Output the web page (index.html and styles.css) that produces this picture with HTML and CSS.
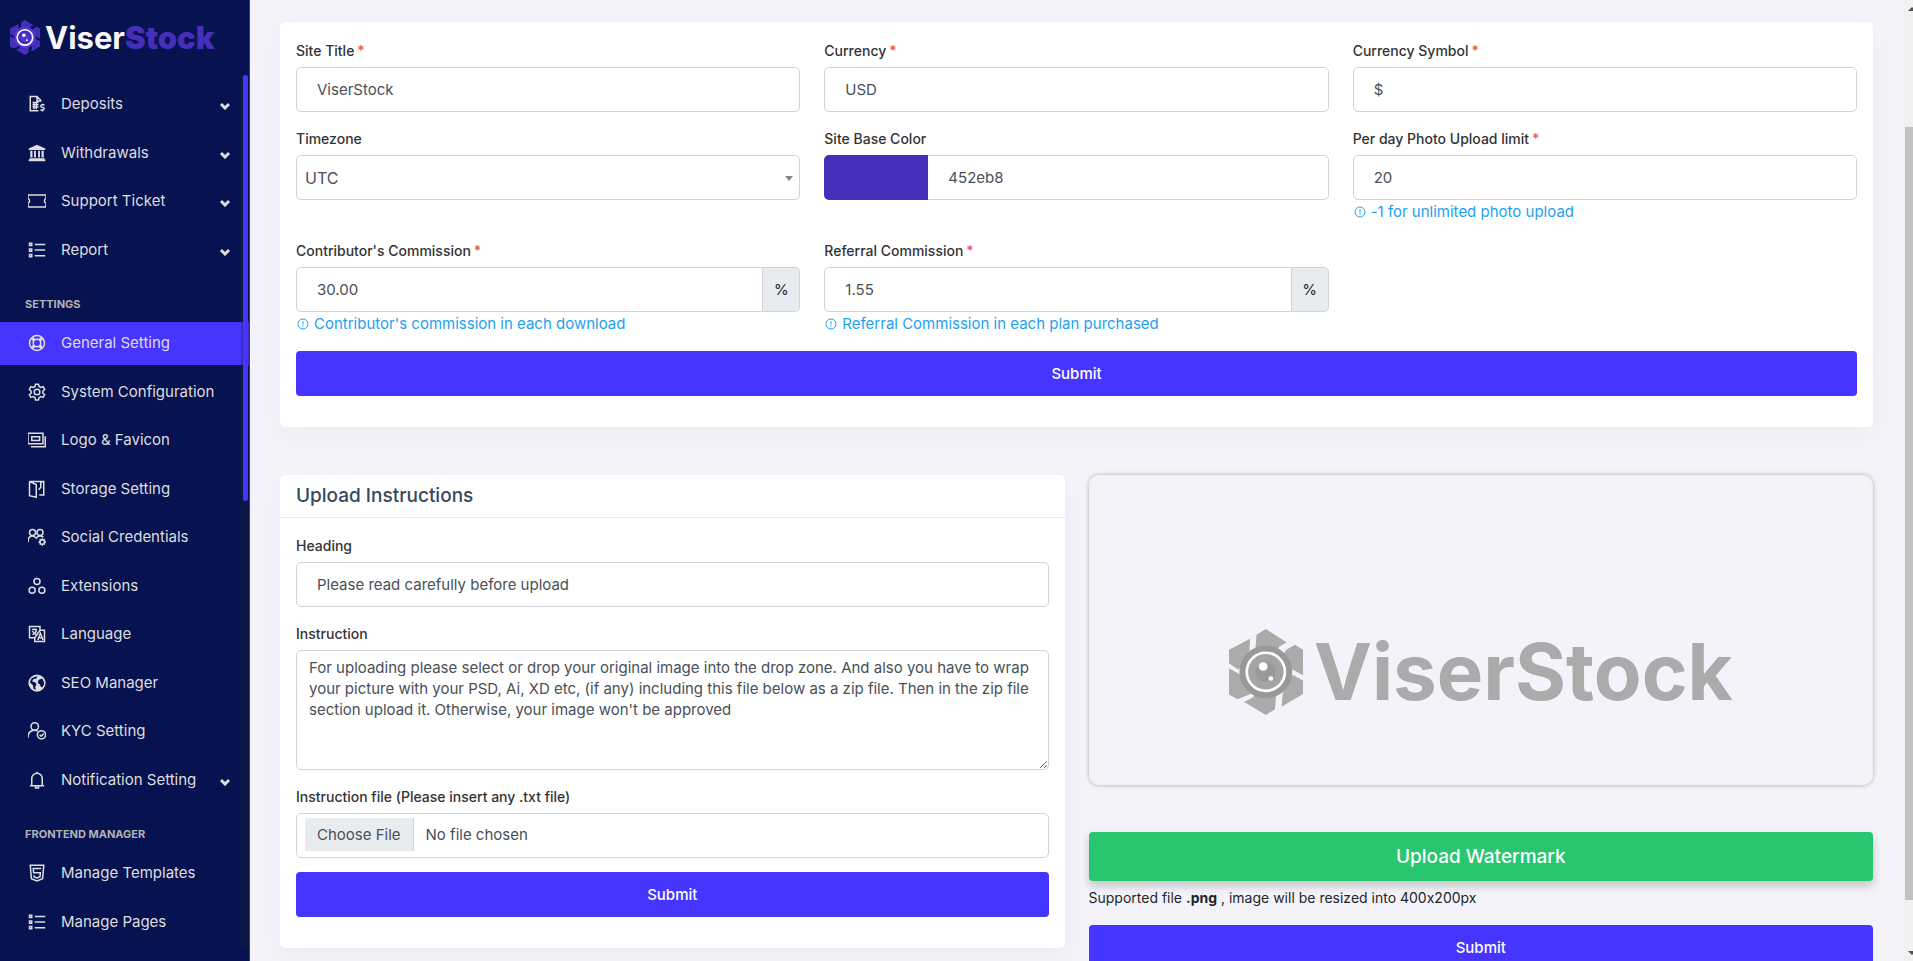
FILE: index.html
```html
<!DOCTYPE html>
<html lang="en">
<head>
<meta charset="utf-8">
<meta name="viewport" content="width=device-width, initial-scale=1">
<title>ViserStock - General Setting</title>
<link rel="stylesheet" href="styles.css">
</head>
<body>
<svg class="sprite" aria-hidden="true">
  <symbol id="logo-mark" viewBox="40 28 221 257">
    <g class="blade">
      <path d="M150 28 213 68 190 80 184 100H118L122 45z"/>
      <path d="M211 90 237 75 261 90V166L228 148 200 110z"/>
      <path d="M230 165 261 182V222L197 260 201 218z"/>
      <path d="M85 246 112 232 120 214H182L177 268 150 285z"/>
      <path d="M40 145 72 163 105 222 65 238 40 224z"/>
      <path d="M40 90 103 57 101 100 68 150 40 130z"/>
    </g>
    <circle class="lens" cx="150" cy="156" r="79"/>
    <circle class="glass" cx="150" cy="156" r="57"/>
    <circle class="lens" cx="150" cy="156" r="30"/>
    <circle class="shine" cx="142" cy="140" r="13"/>
    <circle class="shine" cx="165" cy="176" r="7"/>
  </symbol>
  <symbol id="i-invoice" viewBox="0 0 24 24"><path d="M17 9V7l-5-5H3v19h11M12 2v6h5M6 10h8M6 13h8M6 16h8M8 10v9M11 10v9"/><path d="M22 13h-3.500a1.800 1.800 0 0 0 0 3.500h1.500a1.800 1.800 0 0 1 0 3.500H16.500M19.300 11.500V13M19.300 20v2"/></symbol>
  <symbol id="i-bank" viewBox="0 0 24 24"><path class="solid" d="M12 1 23 6v2H1V6zM3 9h3v9H3zM8 9h2.500v9H8zM13.500 9H16v9h-2.500zM18 9h3v9h-3zM2 19h20v1.500h1V23H1v-2.500h1z"/></symbol>
  <symbol id="i-ticket" viewBox="0 0 24 24"><path d="M0 4h24v5a3.200 3.200 0 0 0 0 6v5H0v-5a3.200 3.200 0 0 0 0-6z"/></symbol>
  <symbol id="i-list" viewBox="0 0 24 24"><path d="M9 4.500h14M9 12h14M9 19.500h14M2 3h3v3H2zM2 10.500h3v3H2zM2 18h3v3H2z"/></symbol>
  <symbol id="i-ring" viewBox="0 0 24 24"><circle cx="12" cy="12" r="10"/><circle cx="12" cy="12" r="5"/><path class="thick" d="m5.500 5.500 3 3M18.500 5.500l-3 3M5.500 18.500l3-3M18.500 18.500l-3-3"/></symbol>
  <symbol id="i-gear" viewBox="0 0 24 24"><path d="M10 1.500h4l.7 3.200 2.300 1.300 3.200-1 2 3.500L19.800 11v2.600l2.400 2.100-2 3.500-3.200-1-2.300 1.300-.7 3h-4l-.7-3L7 18.200l-3.200 1-2-3.500 2.400-2.100V11L1.800 8.500l2-3.500L7 6l2.300-1.300z"/><circle cx="12" cy="12" r="3.800"/></symbol>
  <symbol id="i-images" viewBox="0 0 24 24"><path d="M0 3h20v14H0zM5 7.500h10.500v5H5zM23 7v14H4"/></symbol>
  <symbol id="i-door" viewBox="0 0 24 24"><path d="M2 2h19v18h-6M2 2v19l9 2V6L2 2M21 2l-4 1v7l-3 3"/></symbol>
  <symbol id="i-users-cog" viewBox="0 0 24 24"><circle cx="6" cy="6" r="4"/><circle cx="16" cy="6" r="4"/><path d="M0 19c0-5 2-8.500 6-8.500 2 0 3.500 1 5 3 1-2 3-3 5-3 2.500 0 4 1 4.500 2"/><circle cx="19" cy="18.500" r="3"/><path d="M19 13.500v2M19 21.500v2M14 18.500h2M22 18.500h2M15.500 15l1.400 1.400M21.100 20.600l1.400 1.400M22.500 15l-1.400 1.400M16.900 20.600 15.500 22"/></symbol>
  <symbol id="i-cubes" viewBox="0 0 24 24"><circle cx="12" cy="6" r="4"/><circle cx="5.500" cy="17.500" r="4"/><circle cx="18.500" cy="17.500" r="4"/></symbol>
  <symbol id="i-language" viewBox="0 0 24 24"><path d="M2 2h14v5h6v15H9v-5H2zM16 7 9 17M5 6h7M8.500 4.500V6M6 13c3-1 5-4 5-7M6 8c1 2 3 4 5 4.500M13 20l3.500-9 3.500 9M14.500 17h4"/></symbol>
  <symbol id="i-globe" viewBox="0 0 24 24"><path class="solid" fill-rule="evenodd" d="M12 .5a11.500 11.500 0 1 0 0 23 11.500 11.500 0 0 0 0-23zM13 3l-2 3-4 1-1.500 3 4 1 2 3-2 3 1 4-3-1-1-5-4-4 2-5 4-2zM16 7l3-1 2 4 .5 4-2.500 4-2-1-1-3-3-2 1-4z"/></symbol>
  <symbol id="i-user-check" viewBox="0 0 24 24"><circle cx="9" cy="6" r="5"/><path d="M0 21c0-6 3-10 9-10 2 0 3 .5 4 1"/><circle cx="18" cy="17" r="5.500"/><path d="m15.500 17 2 2 3.500-3.500"/></symbol>
  <symbol id="i-bell" viewBox="0 0 24 24"><path d="M2.500 19.500h19M5 19V10a7 7 0 0 1 14 0v9M12 1v2M10 20v2.500h4V20"/></symbol>
  <symbol id="i-html" viewBox="0 0 24 24"><path d="M3 1.500h18l-1.500 18L12 22.500l-7.500-3z"/><path d="M17.500 6H7l.5 5.500H16.500L16 17l-4 1.500L8 17v-2"/></symbol>
  <symbol id="i-chevron" viewBox="0 0 12 8"><path d="m2 2 4 4 4-4"/></symbol>
  <symbol id="i-info" viewBox="0 0 24 24"><circle cx="12" cy="12" r="10"/><path d="M12 6.500v7M12 15.500v2"/></symbol>
</svg>

<div class="layout">
  <aside class="sidebar">
    <a class="brand" href="#"><svg class="brand-mark"><use href="#logo-mark"/></svg><span class="brand-name">Viser<b>Stock</b></span></a>
    <nav class="menu" aria-label="Main menu">
      <a class="item" href="#"><svg class="icon"><use href="#i-invoice"/></svg><span>Deposits</span><svg class="chevron"><use href="#i-chevron"/></svg></a>
      <a class="item" href="#"><svg class="icon"><use href="#i-bank"/></svg><span>Withdrawals</span><svg class="chevron"><use href="#i-chevron"/></svg></a>
      <a class="item" href="#"><svg class="icon"><use href="#i-ticket"/></svg><span>Support Ticket</span><svg class="chevron"><use href="#i-chevron"/></svg></a>
      <a class="item" href="#"><svg class="icon"><use href="#i-list"/></svg><span>Report</span><svg class="chevron"><use href="#i-chevron"/></svg></a>
      <h2 class="section">SETTINGS</h2>
      <a class="item active" href="#" aria-current="page"><svg class="icon"><use href="#i-ring"/></svg><span>General Setting</span></a>
      <a class="item" href="#"><svg class="icon"><use href="#i-gear"/></svg><span>System Configuration</span></a>
      <a class="item" href="#"><svg class="icon"><use href="#i-images"/></svg><span>Logo &amp; Favicon</span></a>
      <a class="item" href="#"><svg class="icon"><use href="#i-door"/></svg><span>Storage Setting</span></a>
      <a class="item" href="#"><svg class="icon"><use href="#i-users-cog"/></svg><span>Social Credentials</span></a>
      <a class="item" href="#"><svg class="icon"><use href="#i-cubes"/></svg><span>Extensions</span></a>
      <a class="item" href="#"><svg class="icon"><use href="#i-language"/></svg><span>Language</span></a>
      <a class="item" href="#"><svg class="icon"><use href="#i-globe"/></svg><span>SEO Manager</span></a>
      <a class="item" href="#"><svg class="icon"><use href="#i-user-check"/></svg><span>KYC Setting</span></a>
      <a class="item" href="#"><svg class="icon"><use href="#i-bell"/></svg><span>Notification Setting</span><svg class="chevron"><use href="#i-chevron"/></svg></a>
      <h2 class="section">FRONTEND MANAGER</h2>
      <a class="item" href="#"><svg class="icon"><use href="#i-html"/></svg><span>Manage Templates</span></a>
      <a class="item" href="#"><svg class="icon"><use href="#i-list"/></svg><span>Manage Pages</span></a>
      <div class="menu-track"><div class="menu-thumb"></div></div>
    </nav>
  </aside>

  <main class="content">
    <form class="card card-body">
      <div class="grid">
        <div class="field">
          <label class="required" for="site-title">Site Title</label>
          <input class="control" id="site-title" type="text" value="ViserStock">
        </div>
        <div class="field">
          <label class="required" for="currency">Currency</label>
          <input class="control" id="currency" type="text" value="USD">
        </div>
        <div class="field">
          <label class="required" for="symbol">Currency Symbol</label>
          <input class="control" id="symbol" type="text" value="$">
        </div>
        <div class="field">
          <label for="timezone">Timezone</label>
          <div class="select"><select class="control" id="timezone"><option>UTC</option></select></div>
        </div>
        <div class="field">
          <label for="base-color">Site Base Color</label>
          <div class="group">
            <button class="swatch" type="button" aria-label="Pick base color"></button>
            <input class="control" id="base-color" type="text" value="452eb8">
          </div>
        </div>
        <div class="field">
          <label class="required" for="limit">Per day Photo Upload limit</label>
          <input class="control" id="limit" type="text" value="20">
          <p class="hint"><svg class="hint-icon"><use href="#i-info"/></svg>-1 for unlimited photo upload</p>
        </div>
        <div class="field">
          <label class="required" for="contributor">Contributor's Commission</label>
          <div class="group">
            <input class="control" id="contributor" type="text" value="30.00"><span class="addon">%</span>
          </div>
          <p class="hint"><svg class="hint-icon"><use href="#i-info"/></svg>Contributor's commission in each download</p>
        </div>
        <div class="field">
          <label class="required" for="referral">Referral Commission</label>
          <div class="group">
            <input class="control" id="referral" type="text" value="1.55"><span class="addon">%</span>
          </div>
          <p class="hint"><svg class="hint-icon"><use href="#i-info"/></svg>Referral Commission in each plan purchased</p>
        </div>
      </div>
      <button class="btn" type="submit">Submit</button>
    </form>

    <div class="columns">
      <form class="card">
        <h1 class="card-title">Upload Instructions</h1>
        <div class="card-body stack">
          <div class="field">
            <label for="heading">Heading</label>
            <input class="control" id="heading" type="text" value="Please read carefully before upload">
          </div>
          <div class="field">
            <label for="instruction">Instruction</label>
            <textarea class="control area" id="instruction">For uploading please select or drop your original image into the drop zone. And also you have to wrap your picture with your PSD, Ai, XD etc, (if any) including this file below as a zip file. Then in the zip file section upload it. Otherwise, your image won't be approved</textarea>
          </div>
          <div class="field">
            <label for="file">Instruction file (Please insert any .txt file)</label>
            <input class="control file" id="file" type="file" accept=".txt">
          </div>
          <button class="btn" type="submit">Submit</button>
        </div>
      </form>

      <form class="watermark">
        <div class="preview"><svg class="preview-mark"><use href="#logo-mark"/></svg><span>ViserStock</span></div>
        <button class="btn upload" type="button">Upload Watermark</button>
        <p class="support">Supported file <b>.png</b> , image will be resized into 400x200px</p>
        <button class="btn" type="submit">Submit</button>
      </form>
    </div>
  </main>

  <div class="page-track" aria-hidden="true">
    <svg class="arrow" viewBox="0 0 10 14"><path d="M5 11 9 7 13 11z"/></svg>
    <div class="page-rail"><div class="page-thumb"></div></div>
    <svg class="arrow" viewBox="0 0 10 14"><path d="M5 4 9 8 13 4z"/></svg>
  </div>
</div>
</body>
</html>
```
FILE: styles.css
```css
* { box-sizing: border-box; }

body {
  margin: 0;
  background: #f3f3f9;
  color: #212529;
  font-family: Inter, "Open Sans", sans-serif;
  font-size: 15px;
  font-variant-ligatures: no-contextual;
}

h1, h2, p { margin: 0; }
a { color: inherit; text-decoration: none; }
input, select, textarea, button { font: inherit; }
button { border: 0; cursor: pointer; }

.sprite { position: absolute; width: 0; height: 0; }

.layout {
  display: flex;
  height: 100vh;
  overflow: hidden;
}

/* Sidebar */
.sidebar {
  display: flex;
  flex: none;
  flex-direction: column;
  width: 250px;
  padding-bottom: 12px;
  border-right: 1px solid #383f70;
  background: #071251;
  color: #dedede;
}

.brand {
  display: flex;
  flex: none;
  align-items: center;
  gap: 5px;
  height: 75px;
  padding-left: 10px;
}

.brand-mark { width: 30px; height: 35px; }
.brand-mark, .brand b { color: #452eb8; }
.brand-name { color: #f8f8f8; font-size: 31px; font-weight: 700; line-height: 36px; }

.blade { fill: currentColor; }
.lens { fill: var(--lens, #5038d8); }
.glass { fill: var(--glass, #452eb8); stroke: #fff; stroke-width: var(--ring, 12px); }
.shine { fill: #fff; }

.menu {
  position: relative;
  flex: 1;
  min-height: 0;
  padding-top: 8px;
  overflow: hidden;
}

.item {
  display: flex;
  align-items: center;
  gap: 15px;
  margin-bottom: 6px;
  padding: 10px 18px 10px 28px;
  line-height: 1.5;
}

.item.active { background: #4634ff; }

.icon {
  flex: none;
  width: 18px;
  height: 18px;
  fill: none;
  stroke: currentColor;
  stroke-width: 2px;
}

.solid { fill: #dedede; stroke: none; }
.thick { stroke-width: 4px; }

.chevron {
  width: 12px;
  height: 8px;
  margin: 4px 0 0 auto;
  fill: none;
  stroke: currentColor;
  stroke-width: 3px;
}

.section {
  padding: 19px 25px 10px;
  color: #b3b3b3;
  font-size: 11px;
  font-weight: 700;
  line-height: 16px;
}

.menu-track {
  position: absolute;
  top: 0;
  right: 0;
  bottom: 0;
  width: 8px;
  padding: 0 1px 0 2px;
  border-radius: 4px;
  background: rgba(34, 34, 34, 0.3);
}

.menu-thumb { height: 48.7%; border-radius: 4px; background: #4634ff; }

/* Content */
.content { flex: 1; min-width: 0; padding: 22px 30px; }

.card {
  border-radius: 5px;
  background: #fff;
  box-shadow: 0 8px 24px rgba(18, 38, 63, 0.03);
}

.card-body { padding: 16px 16px 31px; }

.card-title {
  padding: 0 16px;
  border-bottom: 1px solid #ebebeb;
  color: #34495e;
  font-size: 19px;
  font-weight: 500;
  line-height: 42px;
}

.grid {
  display: grid;
  grid-template-columns: repeat(3, 1fr);
  gap: 14px 24px;
}

.stack { display: grid; gap: 14px; padding-top: 15px; }

label {
  display: block;
  margin-bottom: 3px;
  color: #333;
  font-size: 14px;
  font-weight: 500;
  line-height: 26px;
}

.required::after { margin-left: 3px; color: #ea5455; content: "*"; }

.control {
  display: block;
  width: 100%;
  height: 45px;
  padding: 0 20px 1px;
  border: 1px solid #ced4da;
  border-radius: 5px;
  background: #fff;
  color: #495057;
}

.select { position: relative; }
.select .control { padding: 0 8px; appearance: none; font-size: 16px; }
.select::after {
  position: absolute;
  top: 21px;
  right: 7px;
  border: 4px solid transparent;
  border-top: 5px solid #888;
  border-bottom: 0;
  content: "";
}

.group { display: flex; }
.group .control { flex: 1; min-width: 0; }
.group .control:first-child { border-radius: 5px 0 0 5px; }
.group .control:last-child { border-left: 0; border-radius: 0 5px 5px 0; }

.swatch { width: 104px; border-radius: 5px 0 0 5px; background: #452eb8; }

.addon {
  width: 37px;
  border: 1px solid #ced4da;
  border-left: 0;
  border-radius: 0 5px 5px 0;
  background: #e9ecef;
  line-height: 43px;
  text-align: center;
}

.hint {
  display: flex;
  align-items: center;
  gap: 5px;
  padding-left: 1px;
  color: #1e9ff2;
  line-height: 24px;
}

.hint-icon { width: 12px; height: 12px; fill: none; stroke: currentColor; stroke-width: 2px; }

.area { height: 120px; padding: 6px 12px; line-height: 21px; resize: vertical; }

.file { padding: 4px 8px; line-height: 33px; }
.file::file-selector-button {
  height: 33px;
  margin: 0 12px 0 0;
  padding: 0 12px;
  border: 0;
  border-right: 1px solid #ced4da;
  background: #e9ecef;
  color: #495057;
  font: inherit;
}

.btn {
  display: block;
  width: 100%;
  height: 45px;
  border-radius: 4px;
  background: #4634ff;
  color: #fff;
  font-weight: 500;
}

.grid + .btn { margin-top: 15px; }

.columns {
  display: grid;
  grid-template-columns: 1fr 1fr;
  align-items: start;
  gap: 24px;
  margin-top: 48px;
}

/* Watermark */
.preview {
  display: flex;
  align-items: center;
  justify-content: center;
  gap: 11px;
  height: 310px;
  margin-bottom: 47px;
  padding-top: 84px;
  border: 2px solid #f1f1f1;
  border-radius: 10px;
  box-shadow: 0 0 4px rgba(0, 0, 0, 0.3);
  color: #ababab;
  font-size: 78px;
  font-weight: 700;
  line-height: 90px;
}

.preview-mark {
  --lens: #999;
  --glass: #a4a4a4;
  --ring: 8px;
  width: 74px;
  height: 86px;
}

.upload {
  height: 49px;
  background: #28c76f;
  box-shadow: 0 5px 10px rgba(0, 0, 0, 0.2);
  font-size: 19px;
}

.support { margin: 5px 0 15px; font-size: 14px; line-height: 24px; }

/* Page scrollbar */
.page-track {
  display: flex;
  flex: none;
  flex-direction: column;
  width: 10px;
  background: #f1f1f1;
}

.arrow { flex: none; width: 10px; height: 14px; fill: #505050; }
.page-rail { flex: 1; padding: 113px 0 47px 2px; }
.page-thumb { height: 100%; background: #c1c1c1; }
```
